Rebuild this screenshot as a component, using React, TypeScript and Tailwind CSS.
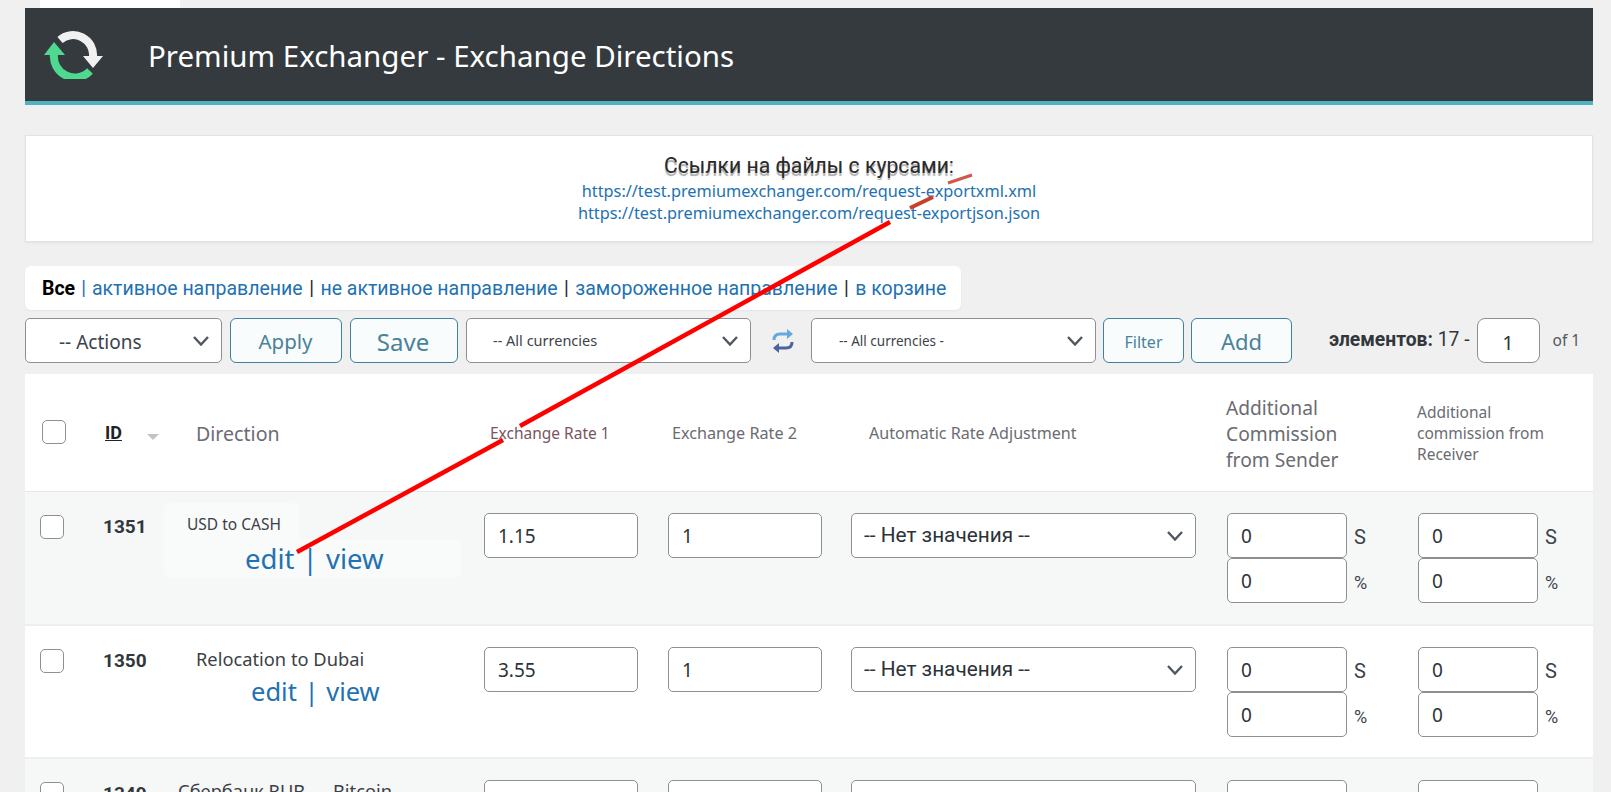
const noto = "font-['Noto_Sans',sans-serif]";
const roboto = "font-['Roboto',sans-serif]";

const rows = [
  { id: "1351", name: "USD to CASH", rate1: "1.15", nameClass: "pl-[28px] pt-[0px] text-[15.5px]", linkClass: "pl-[86px] mt-[6px] text-[27.5px]", halo: true, bg: "bg-[#f6f7f7]", pb: "pb-[21px]" },
  { id: "1350", name: "Relocation to Dubai", rate1: "3.55", nameClass: "pl-[37px] pt-[1px] text-[18.3px]", linkClass: "pl-[92px] mt-[3px] text-[25.5px]", halo: false, bg: "bg-white", pb: "pb-[20px]" },
  { id: "1349", name: "Сбербанк RUB → Bitcoin", rate1: "1", nameClass: "pl-[19px] pt-[0px] text-[18.3px]", linkClass: "pl-[92px] mt-[3px] text-[25.5px]", halo: false, bg: "bg-[#f6f7f7]", pb: "pb-[20px]" },
];

function Chevron({ className }: { className: string }) {
  return (
    <svg viewBox="0 0 16 10" className={className} fill="none" stroke="#50575e" strokeWidth="2.4">
      <path d="M1 1l7 7.5L15 1" />
    </svg>
  );
}

function Select({ label, className, textClass }: { label: string; className: string; textClass: string }) {
  return (
    <div className={`flex h-[45px] items-center justify-between rounded-[5px] border border-[#8c8f94] bg-white ${className}`}>
      <span className={`${textClass} whitespace-nowrap`}>{label}</span>
      <Chevron className="mr-[12px] h-[10px] w-[16px] shrink-0" />
    </div>
  );
}

function Btn({ label, className }: { label: string; className: string }) {
  return (
    <button className={`${noto} flex h-[45px] items-center justify-center rounded-[6px] border border-[#3f8299] bg-[#f9fcfc] pt-[2px] text-[#4a8299] ${className}`}>
      {label}
    </button>
  );
}

function Field({ value, className }: { value: string; className: string }) {
  return (
    <input
      readOnly
      value={value}
      className={`${noto} h-[45px] rounded-[5px] border border-[#8c8f94] bg-white pl-[13px] text-[19px] text-[#2c3338] outline-none ${className}`}
    />
  );
}

function Commission() {
  return (
    <div className="grid grid-cols-[120px_auto]">
      <Field value="0" className="w-[120px]" />
      <span className={`${roboto} pl-[7px] pt-[9px] text-[20px] text-[#3c434a]`}>S</span>
      <Field value="0" className="w-[120px]" />
      <span className={`${roboto} pl-[7px] pt-[11px] text-[18px] text-[#3c434a]`}>%</span>
    </div>
  );
}

function Logo() {
  return (
    <svg viewBox="0 0 59 48" className="h-[48px] w-[59px]" fill="none">
      <path d="M16 9A20 20 0 0 1 49 26" stroke="#f1f1f1" strokeWidth="8" />
      <path d="M39 25h20l-10 12z" fill="#f1f1f1" />
      <path d="M46 40A21 21 0 0 1 10 23" stroke="#4fd990" strokeWidth="8" />
      <path d="M0 24h21L10 11z" fill="#4fd990" />
    </svg>
  );
}

function SwapIcon() {
  return (
    <svg viewBox="0 0 22 24" className="h-[24px] w-[22px]" fill="none" strokeWidth="3">
      <path d="M2 11c0-4 2-6 6-6h9" stroke="#66a9dc" />
      <path d="M15 0l6 5-6 5z" fill="#66a9dc" />
      <path d="M20 13c0 4-2 6-6 6H5" stroke="#4a64a0" />
      <path d="M7 14l-6 5 6 5z" fill="#4a64a0" />
    </svg>
  );
}

function Row({ row }: { row: (typeof rows)[number] }) {
  return (
    <div className={`grid grid-cols-[63px_56px_325px_184px_183px_376px_191px_1fr] items-start border-b-2 border-[#eeeeee] pl-[15px] pt-[21px] ${row.bg} ${row.pb}`}>
      <span className="mt-[2px] h-[24px] w-[24px] rounded-[5px] border border-[#8c8f94] bg-white" />
      <span className={`${roboto} text-[19px] font-bold text-[#32373c]`}>{row.id}</span>
      <div className="relative">
        {row.halo && (
          <>
            <div className="absolute left-[5px] top-[-10px] h-[75px] w-[135px] rounded-[6px] bg-[#f9fafa]" />
            <div className="absolute left-[5px] top-[27px] h-[38px] w-[298px] rounded-[6px] bg-[#f9fafa]" />
          </>
        )}
        <div className={`${noto} relative leading-[22px] text-[#3c3f46] ${row.nameClass}`}>{row.name}</div>
        <div className={`${noto} relative whitespace-nowrap leading-[36px] text-[#2271b1] ${row.linkClass}`}>
          edit <span className="mx-[1px]">|</span> view
        </div>
      </div>
      <Field value={row.rate1} className="w-[154px]" />
      <Field value="1" className="w-[154px]" />
      <Select label="-- Нет значения --" className="w-[345px]" textClass={`${roboto} pl-[12px] text-[20.8px] text-[#2c3338]`} />
      <Commission />
      <Commission />
    </div>
  );
}

export default function App() {
  return (
    <div className="relative h-[792px] overflow-hidden bg-[#f0f0f0] pl-[25px] pr-[18px]">
      <div className="ml-[15px] h-[8px] w-[140px] bg-white" />

      <header className="flex h-[97px] items-center border-b-4 border-[#4fb3c0] bg-[#343a3e] pl-[19px]">
        <Logo />
        <h1 className={`${noto} ml-[45px] pt-[3px] text-[29.5px] font-normal text-white`}>Premium Exchanger - Exchange Directions</h1>
      </header>

      <section className="mt-[30px] flex h-[107px] flex-col items-center border border-[#e3e3e3] bg-white pt-[16px] shadow-[0_1px_2px_rgba(0,0,0,0.06)]">
        <div className={`${roboto} h-[28px] overflow-hidden text-[21.2px] leading-[28px] text-[#2a2a2a] [text-shadow:0_3px_1px_#aaa]`}>Ссылки на файлы с курсами:</div>
        <a className={`${noto} text-[16.3px] leading-[22px] text-[#2271b1]`}>https://test.premiumexchanger.com/request-exportxml.xml</a>
        <a className={`${noto} text-[16.3px] leading-[22px] text-[#2271b1]`}>https://test.premiumexchanger.com/request-exportjson.json</a>
      </section>

      <nav className={`${roboto} mt-[24px] flex h-[44px] w-[936px] items-center rounded-[6px] bg-white pl-[17px] pt-[2px] text-[19.5px] shadow-[0_1px_2px_rgba(0,0,0,0.05)]`}>
        <b className="font-bold text-black">Все</b>
        <span className="mx-[6px] text-[#2271b1]">|</span>
        <a className="text-[#2271b1]">активное направление</a>
        <span className="mx-[6.5px] text-[#1d2327]">|</span>
        <a className="text-[#2271b1]">не активное направление</a>
        <span className="mx-[6.5px] text-[#1d2327]">|</span>
        <a className="text-[#2271b1]">замороженное направление</a>
        <span className="mx-[6.5px] text-[#1d2327]">|</span>
        <a className="text-[#2271b1]">в корзине</a>
      </nav>

      <div className="mt-[8px] flex h-[45px] items-center">
        <Select label="-- Actions" className="w-[197px]" textClass={`${noto} pl-[33px] pt-[3px] text-[19px] text-[#3c434a]`} />
        <Btn label="Apply" className="ml-[8px] w-[112px] pr-[1px] text-[20.5px]" />
        <Btn label="Save" className="ml-[8px] w-[108px] pr-[2px] text-[24px]" />
        <Select label="-- All currencies" className="ml-[8px] w-[285px]" textClass={`${noto} pl-[26px] text-[14.5px] text-[#3c434a]`} />
        <span className="ml-[21px] mr-[17px]"><SwapIcon /></span>
        <Select label="-- All currencies -" className="w-[285px]" textClass={`${noto} pl-[27px] pt-[1px] text-[13.5px] text-[#3c434a]`} />
        <Btn label="Filter" className="ml-[7px] w-[81px] text-[16px]" />
        <Btn label="Add" className="ml-[7px] w-[101px] text-[22px]" />
        <span className={`${roboto} ml-[37px] whitespace-nowrap text-[19.3px] text-[#32373c]`}>
          <b className="font-bold">элементов:</b> 17 -
        </span>
        <input readOnly value="1" className={`${noto} ml-[7px] h-[45px] w-[63px] rounded-[8px] border border-[#8c8f94] bg-white pt-[3px] text-center text-[20px] text-[#2c3338] outline-none`} />
        <span className={`${noto} ml-[13px] text-[15.5px] text-[#50575e]`}>of 1</span>
      </div>

      <div className="mt-[11px] bg-white">
        <div className="grid h-[118px] grid-cols-[63px_91px_294px_182px_197px_357px_191px_1fr] items-center border-b border-[#e6e8e8] pl-[17px] pt-[2px]">
          <span className="mt-[-4px] h-[24px] w-[24px] rounded-[5px] border border-[#8c8f94] bg-white" />
          <div className="mt-[-2px] flex items-center">
            <span className={`${roboto} text-[18px] font-bold text-[#1d2327] underline`}>ID</span>
            <span className="ml-[25px] mt-[8px] border-x-[6px] border-t-[6px] border-x-transparent border-t-[#c3c4c7]" />
          </div>
          <span className={`${noto} text-[19.6px] text-[#6b6b72]`}>Direction</span>
          <span className={`${noto} text-[15.5px] text-[#7a5560]`}>Exchange Rate 1</span>
          <span className={`${noto} text-[16.2px] text-[#6b6b72]`}>Exchange Rate 2</span>
          <span className={`${noto} text-[16.1px] text-[#6b6b72]`}>Automatic Rate Adjustment</span>
          <span className={`${noto} text-[19.2px] leading-[26px] text-[#6b6b72]`}>Additional<br />Commission<br />from Sender</span>
          <span className={`${noto} text-[15.5px] leading-[21px] text-[#6b6b72]`}>Additional<br />commission from<br />Receiver</span>
        </div>
        {rows.map((row) => (
          <Row key={row.id} row={row} />
        ))}
      </div>

      {/* red annotation arrow drawn over the page */}
      <svg className="pointer-events-none absolute left-0 top-0 h-[792px] w-[1611px]" viewBox="0 0 1611 792" fill="none">
        <path d="M297 552L503 440" stroke="#ff0000" strokeWidth="4.5" />
        <path d="M520 426L890 222" stroke="#ff0000" strokeWidth="4.5" />
        <path d="M910 208L933 197" stroke="#c8402a" strokeWidth="4" />
        <path d="M948 183L972 175" stroke="#d0584a" strokeWidth="3" />
      </svg>
    </div>
  );
}
